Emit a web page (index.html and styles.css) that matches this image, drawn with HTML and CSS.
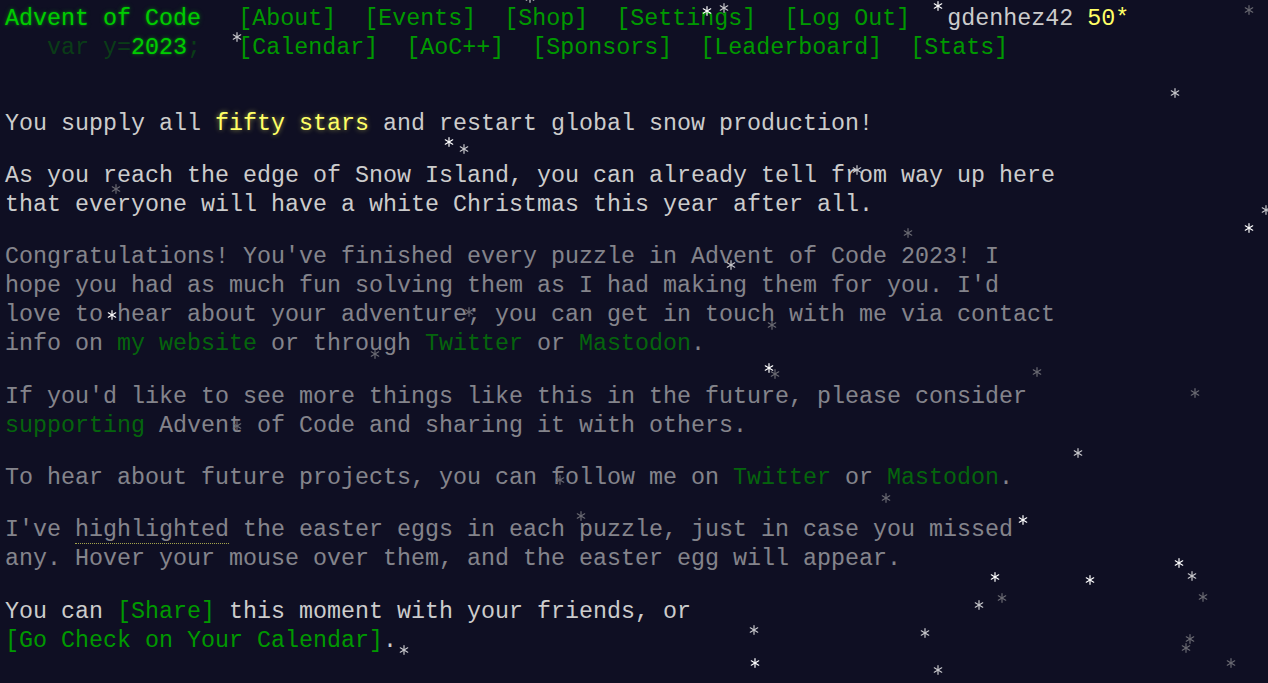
FILE: index.html
```html
<!DOCTYPE html>
<html lang="en">
<head>
<meta charset="utf-8">
<title>Day 25 - Advent of Code 2023</title>
<link rel="stylesheet" href="styles.css">
</head>
<body>
<svg class="defs" width="0" height="0" aria-hidden="true">
  <symbol id="f" viewBox="-5 -5 10 10">
    <g stroke="currentColor" stroke-width="1.2" stroke-linecap="round">
      <line x1="0" y1="-4.3" x2="0" y2="4.3"/>
      <line x1="-3.7" y1="-2.15" x2="3.7" y2="2.15"/>
      <line x1="-3.7" y1="2.15" x2="3.7" y2="-2.15"/>
    </g>
  </symbol>
</svg>
<header class="header">
  <div class="row">
    <h1 class="title"><a class="title-link" href="#">Advent of Code</a></h1>
    <nav><ul class="nav">
      <li><a href="#">[About]</a></li>
      <li><a href="#">[Events]</a></li>
      <li><a href="#">[Shop]</a></li>
      <li><a href="#">[Settings]</a></li>
      <li><a href="#">[Log Out]</a></li>
    </ul></nav>
    <div class="user">gdenhez42 <span class="star-count">50*</span></div>
  </div>
  <div class="row">
    <h1 class="title">&nbsp;&nbsp;&nbsp;<span class="wrap">var y=</span><a class="title-link" href="#">2023</a><span class="wrap">;</span></h1>
    <nav><ul class="nav">
      <li><a href="#">[Calendar]</a></li>
      <li><a href="#">[AoC++]</a></li>
      <li><a href="#">[Sponsors]</a></li>
      <li><a href="#">[Leaderboard]</a></li>
      <li><a href="#">[Stats]</a></li>
    </ul></nav>
  </div>
</header>
<main class="main">
  <article class="article">
    <p>You supply all <em class="star">fifty stars</em> and restart global snow production!</p>
    <p>As you reach the edge of Snow Island, you can already tell from way up here that everyone will have a white Christmas this year after all.</p>
    <p class="quiet">Congratulations! You've finished every puzzle in Advent of Code 2023! I hope you had as much fun solving them as I had making them for you. I'd love to hear about your adventure; you can get in touch with me via contact info on <a href="#">my website</a> or through <a href="#">Twitter</a> or <a href="#">Mastodon</a>.</p>
    <p class="quiet">If you'd like to see more things like this in the future, please consider <a href="#">supporting</a> Advent of Code and sharing it with others.</p>
    <p class="quiet">To hear about future projects, you can follow me on <a href="#">Twitter</a> or <a href="#">Mastodon</a>.</p>
    <p class="quiet">I've <span class="egg">highlighted</span> the easter eggs in each puzzle, just in case you missed any. Hover your mouse over them, and the easter egg will appear.</p>
    <p>You can <a class="nowrap" href="#">[Share]</a> this moment with your friends, or <span class="nowrap"><a href="#">[Go Check on Your Calendar]</a>.</span></p>
  </article>
</main>
<div class="snow" aria-hidden="true">
  <svg class="flake m" style="left:525px;top:-7px"><use href="#f"/></svg>
  <svg class="flake b" style="left:702px;top:6px"><use href="#f"/></svg>
  <svg class="flake m" style="left:719px;top:3px"><use href="#f"/></svg>
  <svg class="flake m" style="left:232px;top:32px"><use href="#f"/></svg>
  <svg class="flake b" style="left:933px;top:1px"><use href="#f"/></svg>
  <svg class="flake d" style="left:1244px;top:5px"><use href="#f"/></svg>
  <svg class="flake m" style="left:1170px;top:88px"><use href="#f"/></svg>
  <svg class="flake b" style="left:444px;top:137px"><use href="#f"/></svg>
  <svg class="flake m" style="left:459px;top:144px"><use href="#f"/></svg>
  <svg class="flake d" style="left:111px;top:184px"><use href="#f"/></svg>
  <svg class="flake m" style="left:852px;top:165px"><use href="#f"/></svg>
  <svg class="flake d" style="left:903px;top:228px"><use href="#f"/></svg>
  <svg class="flake b" style="left:1244px;top:223px"><use href="#f"/></svg>
  <svg class="flake m" style="left:1261px;top:205px"><use href="#f"/></svg>
  <svg class="flake m" style="left:726px;top:260px"><use href="#f"/></svg>
  <svg class="flake d" style="left:464px;top:307px"><use href="#f"/></svg>
  <svg class="flake b" style="left:107px;top:310px"><use href="#f"/></svg>
  <svg class="flake d" style="left:767px;top:320px"><use href="#f"/></svg>
  <svg class="flake d" style="left:370px;top:349px"><use href="#f"/></svg>
  <svg class="flake b" style="left:764px;top:363px"><use href="#f"/></svg>
  <svg class="flake d" style="left:770px;top:369px"><use href="#f"/></svg>
  <svg class="flake d" style="left:1032px;top:367px"><use href="#f"/></svg>
  <svg class="flake d" style="left:1190px;top:388px"><use href="#f"/></svg>
  <svg class="flake d" style="left:232px;top:421px"><use href="#f"/></svg>
  <svg class="flake m" style="left:1073px;top:448px"><use href="#f"/></svg>
  <svg class="flake d" style="left:555px;top:475px"><use href="#f"/></svg>
  <svg class="flake d" style="left:881px;top:493px"><use href="#f"/></svg>
  <svg class="flake d" style="left:576px;top:511px"><use href="#f"/></svg>
  <svg class="flake b" style="left:1018px;top:515px"><use href="#f"/></svg>
  <svg class="flake b" style="left:1174px;top:558px"><use href="#f"/></svg>
  <svg class="flake m" style="left:1187px;top:571px"><use href="#f"/></svg>
  <svg class="flake b" style="left:990px;top:572px"><use href="#f"/></svg>
  <svg class="flake b" style="left:1085px;top:575px"><use href="#f"/></svg>
  <svg class="flake m" style="left:974px;top:600px"><use href="#f"/></svg>
  <svg class="flake d" style="left:997px;top:593px"><use href="#f"/></svg>
  <svg class="flake d" style="left:1198px;top:592px"><use href="#f"/></svg>
  <svg class="flake m" style="left:749px;top:625px"><use href="#f"/></svg>
  <svg class="flake m" style="left:920px;top:628px"><use href="#f"/></svg>
  <svg class="flake d" style="left:1185px;top:634px"><use href="#f"/></svg>
  <svg class="flake d" style="left:1181px;top:643px"><use href="#f"/></svg>
  <svg class="flake d" style="left:1226px;top:658px"><use href="#f"/></svg>
  <svg class="flake m" style="left:399px;top:645px"><use href="#f"/></svg>
  <svg class="flake b" style="left:750px;top:658px"><use href="#f"/></svg>
  <svg class="flake m" style="left:933px;top:665px"><use href="#f"/></svg>
</div>
</body>
</html>
```
FILE: styles.css
```css
html, body {
  background: #0f0f23;
}
body {
  margin: 0;
  padding: 5px 0 0 5px;
  color: #cccccc;
  font-family: "Liberation Mono", "DejaVu Sans Mono", monospace;
  font-size: 23.33px;
  line-height: 29px;
  min-height: 683px;
  box-sizing: border-box;
  overflow: hidden;
  position: relative;
}
a {
  color: #009900;
  text-decoration: none;
}
.nowrap {
  white-space: nowrap;
}
.defs {
  position: absolute;
  width: 0;
  height: 0;
}
.header {
  white-space: nowrap;
  margin-bottom: 2em;
}
.row {
  display: flex;
  align-items: baseline;
}
.title {
  margin: 0 1em 0 0;
  font-size: inherit;
  font-weight: normal;
  width: 14ch;
  flex: none;
}
.title-link {
  color: #00cc00;
  text-shadow: 0 0 2px rgba(0, 204, 0, 0.5), 0 0 5px rgba(0, 204, 0, 0.4);
}
.wrap {
  color: #009900;
  opacity: 0.33;
}
.nav {
  display: flex;
  list-style: none;
  margin: 0;
  padding: 0;
}
.nav li {
  padding: 0 0.6em;
}
.user {
  margin-left: 23px;
}
.star-count {
  color: #ffff66;
}
.main {
  display: block;
}
.article {
  width: 45.1em;
}
.article p {
  margin: 1em 0;
}
.star {
  font-style: normal;
  color: #ffff66;
  text-shadow: 0 0 5px rgba(255, 255, 102, 0.5);
}
.quiet {
  opacity: 0.62;
}
.egg {
  border-bottom: 1px dotted #ffff66;
}
.snow {
  position: absolute;
  inset: 0;
  pointer-events: none;
}
.flake {
  position: absolute;
  width: 10px;
  height: 10px;
  overflow: visible;
}
.flake.b { color: #ffffff; }
.flake.m { color: #c8c8cc; }
.flake.d { color: #6a6a72; }
```
